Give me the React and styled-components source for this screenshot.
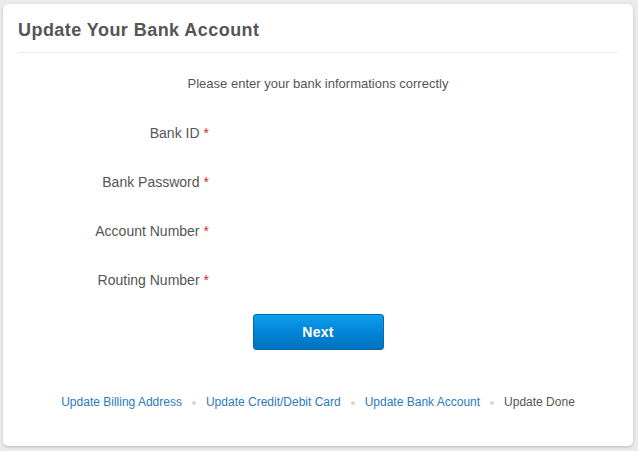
import React from 'react';
import styled, { createGlobalStyle } from 'styled-components';

const GlobalStyle = createGlobalStyle`
  html, body {
    margin: 0;
    padding: 0;
    background: #ebebeb;
  }
  body {
    font-family: "Liberation Sans", Arial, sans-serif;
    color: #555;
  }
`;

const Page = styled.div`
  padding: 4px 5px 5px 3px;
`;

const Card = styled.div`
  width: 630px;
  height: 442px;
  box-sizing: border-box;
  background: #fff;
  border-radius: 5px;
  box-shadow: 0 1px 3px rgba(0, 0, 0, 0.22);
  padding: 0 15px;
  display: flex;
  flex-direction: column;
`;

const Header = styled.h1`
  margin: 0;
  padding: 14px 0 10px;
  font-size: 18px;
  line-height: 24px;
  font-weight: bold;
  letter-spacing: 0.45px;
  color: #555;
  border-bottom: 1px solid #ebebeb;
`;

const Intro = styled.p`
  margin: 23px 0 0;
  text-align: center;
  font-size: 13px;
  line-height: 16px;
  color: #555;
`;

const Form = styled.div`
  margin-top: 16px;
  display: grid;
  grid-template-columns: 191px 1fr;
  grid-auto-rows: 49px;
`;

const Label = styled.label`
  grid-column: 1;
  display: flex;
  align-items: center;
  justify-content: flex-end;
  font-size: 14px;
  color: #555;
`;

const Required = styled.span`
  color: #e3262c;
  margin-left: 4px;
`;

const Actions = styled.div`
  display: flex;
  justify-content: center;
  margin-top: 10px;
`;

const Button = styled.button`
  width: 131px;
  height: 36px;
  border: 1px solid #0a6aa8;
  border-radius: 3px;
  background: linear-gradient(to bottom, #0c9ff0 0%, #0284d6 50%, #0073c0 100%);
  color: #fff;
  font-family: "Liberation Sans", Arial, sans-serif;
  font-size: 14px;
  font-weight: bold;
  letter-spacing: 0.3px;
  cursor: pointer;
`;

const Steps = styled.div`
  margin-top: 45px;
  display: flex;
  justify-content: center;
  align-items: center;
  font-size: 12px;
  line-height: 15px;
`;

const Step = styled.a`
  color: ${(p) => (p.$done ? '#555' : '#2a7bc0')};
  text-decoration: none;
`;

const Dot = styled.span`
  width: 4px;
  height: 4px;
  border-radius: 50%;
  background: #d6d6d6;
  margin: 0 10px;
`;

const fields = ['Bank ID', 'Bank Password', 'Account Number', 'Routing Number'];

const steps = [
  { label: 'Update Billing Address' },
  { label: 'Update Credit/Debit Card' },
  { label: 'Update Bank Account' },
  { label: 'Update Done', done: true },
];

const App = () => {
  return (
    <Page>
      <GlobalStyle />
      <Card>
        <Header>Update Your Bank Account</Header>
        <Intro>Please enter your bank informations correctly</Intro>
        <Form>
          {fields.map((f) => (
            <Label key={f}>
              {f}
              <Required>*</Required>
            </Label>
          ))}
        </Form>
        <Actions>
          <Button>Next</Button>
        </Actions>
        <Steps>
          {steps.map((s, i) => (
            <React.Fragment key={s.label}>
              {i > 0 && <Dot />}
              <Step href="#" $done={s.done}>
                {s.label}
              </Step>
            </React.Fragment>
          ))}
        </Steps>
      </Card>
    </Page>
  );
};

export default App;
